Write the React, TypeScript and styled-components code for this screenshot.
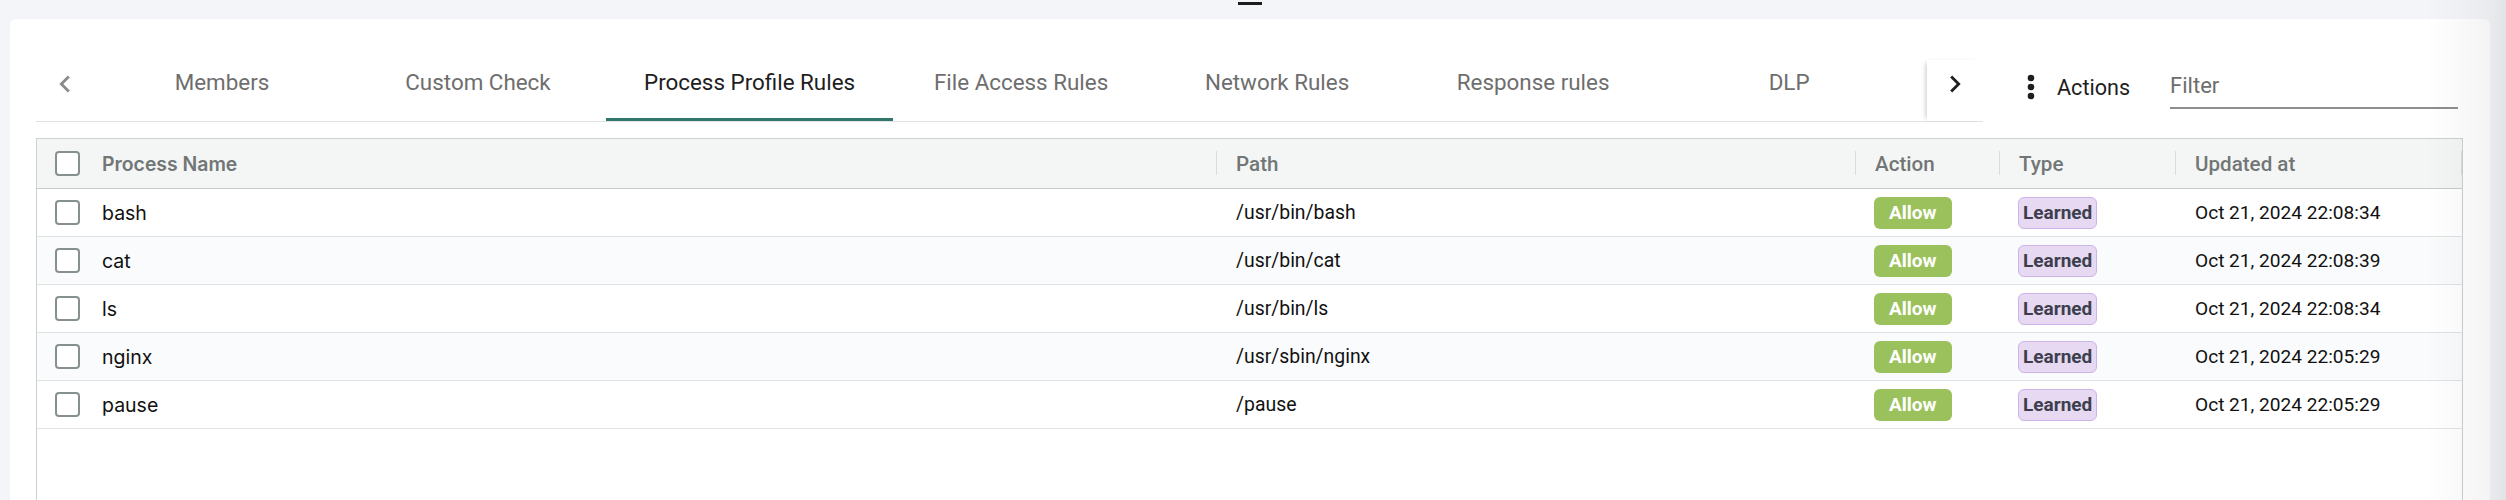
import React from "react";
import styled, { createGlobalStyle, css } from "styled-components";

const GlobalStyle = createGlobalStyle`
  html, body {
    margin: 0;
    padding: 0;
    height: 500px;
    overflow: hidden;
    background: #f4f5f9;
    font-family: Roboto, "Noto Sans", sans-serif;
  }
  * { box-sizing: border-box; }
`;

const Page = styled.div`
  position: relative;
  width: 2506px;
  height: 500px;
  overflow: hidden;
`;

const TopStrip = styled.div`
  height: 19px;
  display: flex;
  justify-content: center;
`;

const Dash = styled.div`
  width: 24px;
  height: 3px;
  margin-top: 2px;
  margin-left: -6px;
  background: #1c1c1c;
`;

const RightShade = styled.div`
  position: absolute;
  top: 0;
  right: 0;
  width: 80px;
  height: 100%;
  pointer-events: none;
  background: linear-gradient(to right, rgba(0, 0, 0, 0) 0%, rgba(0, 0, 0, 0.045) 80%, rgba(0, 0, 0, 0.07) 100%);
`;

const Card = styled.div`
  margin: 0 16px 0 10px;
  background: #ffffff;
  border-radius: 6px 6px 0 0;
  padding: 41px 27px 0 26px;
  min-height: 600px;
`;

const Toolbar = styled.div`
  display: flex;
  align-items: flex-start;
`;

const TabBar = styled.div`
  flex: 0 0 1947px;
  height: 62px;
  display: flex;
  border-bottom: 1px solid #e2e2e2;
`;

const ScrollButton = styled.div<{ $side: "left" | "right" }>`
  flex: 0 0 ${(p) => (p.$side === "left" ? 58 : 56)}px;
  display: flex;
  justify-content: center;
  align-items: flex-start;
  padding-top: 7px;
  color: ${(p) => (p.$side === "left" ? "#8a8a8a" : "#1f1f1f")};
  position: relative;
  z-index: 1;
  background: #fff;
  ${(p) =>
    p.$side === "right" &&
    css`
      box-shadow: -4px 0 5px -3px rgba(0, 0, 0, 0.22);
    `}
`;

const TabScroller = styled.div`
  flex: 1 1 auto;
  display: flex;
  overflow: hidden;
`;

const Tab = styled.div<{ $active?: boolean }>`
  flex: 0 0 auto;
  min-width: 256px;
  padding: 9px 38px 0;
  height: 61px;
  position: relative;
  text-align: center;
  font-size: 22.4px;
  line-height: 26px;
  font-weight: 400;
  white-space: nowrap;
  color: ${(p) => (p.$active ? "#1e1e1e" : "#6e6e6e")};
  ${(p) =>
    p.$active &&
    css`
      &::after {
        content: "";
        position: absolute;
        left: 0;
        right: 0;
        bottom: 0;
        height: 3px;
        background: #2f766b;
      }
    `}
`;

const ActionsButton = styled.div`
  display: flex;
  align-items: center;
  gap: 7px;
  margin-left: 29px;
  margin-top: 8px;
  height: 38px;
  font-size: 21.6px;
  color: #1e1e1e;
`;

const FilterInput = styled.div`
  width: 288px;
  margin-left: 40px;
  margin-top: 7px;
  padding: 6px 0 8px;
  line-height: 26px;
  font-size: 22px;
  color: #6d6d6d;
  border-bottom: 2px solid #8e8e8e;
`;

const Table = styled.div`
  margin-top: 16px;
  border: 1px solid #cdd0d0;
  border-bottom: none;
  min-height: 500px;
`;

const cols = "1179px 639px 144px 176px 1fr";

const HeaderRow = styled.div`
  display: grid;
  grid-template-columns: ${cols};
  height: 50px;
  background: #f4f6f5;
  border-bottom: 1px solid #c6caca;
`;

const HeaderCell = styled.div<{ $divider?: boolean; $endDivider?: boolean; $first?: boolean }>`
  position: relative;
  display: flex;
  align-items: center;
  padding-left: ${(p) => (p.$first ? 18 : 20)}px;
  gap: 22px;
  font-family: ${(p) => (p.$first ? 'Inter, "Liberation Sans", sans-serif' : "Roboto, sans-serif")};
  font-size: ${(p) => (p.$first ? 19.4 : 20.6)}px;
  font-weight: ${(p) => (p.$first ? 600 : 500)};
  color: #727676;
  ${(p) =>
    p.$divider &&
    css`
      &::before {
        content: "";
        position: absolute;
        left: 0;
        top: 12px;
        width: 1px;
        height: 24px;
        background: #d9dcdc;
      }
    `}
  ${(p) =>
    p.$endDivider &&
    css`
      &::after {
        content: "";
        position: absolute;
        right: 0;
        top: 12px;
        width: 1px;
        height: 24px;
        background: #d9dcdc;
      }
    `}
`;

const Row = styled.div<{ $alt?: boolean }>`
  display: grid;
  grid-template-columns: ${cols};
  height: 48px;
  border-bottom: 1px solid #e1e2e3;
  background: ${(p) => (p.$alt ? "#fafbfc" : "#ffffff")};
`;

const Cell = styled.div<{ $first?: boolean; $date?: boolean }>`
  display: flex;
  align-items: center;
  padding-left: ${(p) => (p.$first ? 18 : 20)}px;
  gap: 22px;
  font-family: ${(p) => (p.$first ? 'Inter, "Liberation Sans", sans-serif' : "Roboto, sans-serif")};
  font-size: ${(p) => (p.$first ? 19.5 : p.$date ? 19.1 : 19.4)}px;
  color: #111111;
  white-space: nowrap;
`;

const BadgeCell = styled(Cell)`
  padding-left: 19px;
`;

const Checkbox = styled.span`
  flex: 0 0 auto;
  width: 25px;
  height: 25px;
  border: 2px solid #879090;
  border-radius: 4px;
  background: #fff;
`;

const Badge = styled.span<{ $kind: "allow" | "learned" }>`
  display: inline-flex;
  align-items: center;
  height: 32px;
  border-radius: 6px;
  font-family: Roboto, sans-serif;
  font-weight: 700;
  font-size: 19px;
  ${(p) =>
    p.$kind === "allow"
      ? css`
          padding: 0 15px;
          background: #9bc15d;
          color: #ffffff;
        `
      : css`
          padding: 0 4px;
          background: #e6d9f1;
          border: 1px solid #ccb3ea;
          color: #3e3f4e;
        `}
`;

const ChevronLeft = () => (
  <svg width="34" height="34" viewBox="0 0 24 24" fill="currentColor">
    <path d="M15.41 16.59 10.83 12l4.58-4.59L14 6l-6 6 6 6z" />
  </svg>
);

const ChevronRight = () => (
  <svg width="34" height="34" viewBox="0 0 24 24" fill="currentColor">
    <path d="M8.59 16.59 13.17 12 8.59 7.41 10 6l6 6-6 6z" />
  </svg>
);

const MoreVert = () => (
  <svg width="38" height="38" viewBox="0 0 24 24" fill="#1e1e1e">
    <circle cx="12" cy="6.3" r="2.1" />
    <circle cx="12" cy="12" r="2.1" />
    <circle cx="12" cy="17.7" r="2.1" />
  </svg>
);

const tabs = [
  "Members",
  "Custom Check",
  "Process Profile Rules",
  "File Access Rules",
  "Network Rules",
  "Response rules",
  "DLP",
];

const rows = [
  { name: "bash", path: "/usr/bin/bash", date: "Oct 21, 2024 22:08:34" },
  { name: "cat", path: "/usr/bin/cat", date: "Oct 21, 2024 22:08:39" },
  { name: "ls", path: "/usr/bin/ls", date: "Oct 21, 2024 22:08:34" },
  { name: "nginx", path: "/usr/sbin/nginx", date: "Oct 21, 2024 22:05:29" },
  { name: "pause", path: "/pause", date: "Oct 21, 2024 22:05:29" },
];

export default function App() {
  return (
    <Page>
      <GlobalStyle />
      <TopStrip>
        <Dash />
      </TopStrip>
      <Card>
        <Toolbar>
          <TabBar>
            <ScrollButton $side="left">
              <ChevronLeft />
            </ScrollButton>
            <TabScroller>
              {tabs.map((t) => (
                <Tab key={t} $active={t === "Process Profile Rules"}>
                  {t}
                </Tab>
              ))}
            </TabScroller>
            <ScrollButton $side="right">
              <ChevronRight />
            </ScrollButton>
          </TabBar>
          <ActionsButton>
            <MoreVert />
            <span>Actions</span>
          </ActionsButton>
          <FilterInput>Filter</FilterInput>
        </Toolbar>
        <Table>
          <HeaderRow>
            <HeaderCell $first>
              <Checkbox />
              Process Name
            </HeaderCell>
            <HeaderCell $divider>Path</HeaderCell>
            <HeaderCell $divider>Action</HeaderCell>
            <HeaderCell $divider>Type</HeaderCell>
            <HeaderCell $divider $endDivider>
              Updated at
            </HeaderCell>
          </HeaderRow>
          {rows.map((r, i) => (
            <Row key={r.name} $alt={i % 2 === 1}>
              <Cell $first>
                <Checkbox />
                {r.name}
              </Cell>
              <Cell>{r.path}</Cell>
              <BadgeCell>
                <Badge $kind="allow">Allow</Badge>
              </BadgeCell>
              <BadgeCell>
                <Badge $kind="learned">Learned</Badge>
              </BadgeCell>
              <Cell $date>{r.date}</Cell>
            </Row>
          ))}
        </Table>
      </Card>
      <RightShade />
    </Page>
  );
}
